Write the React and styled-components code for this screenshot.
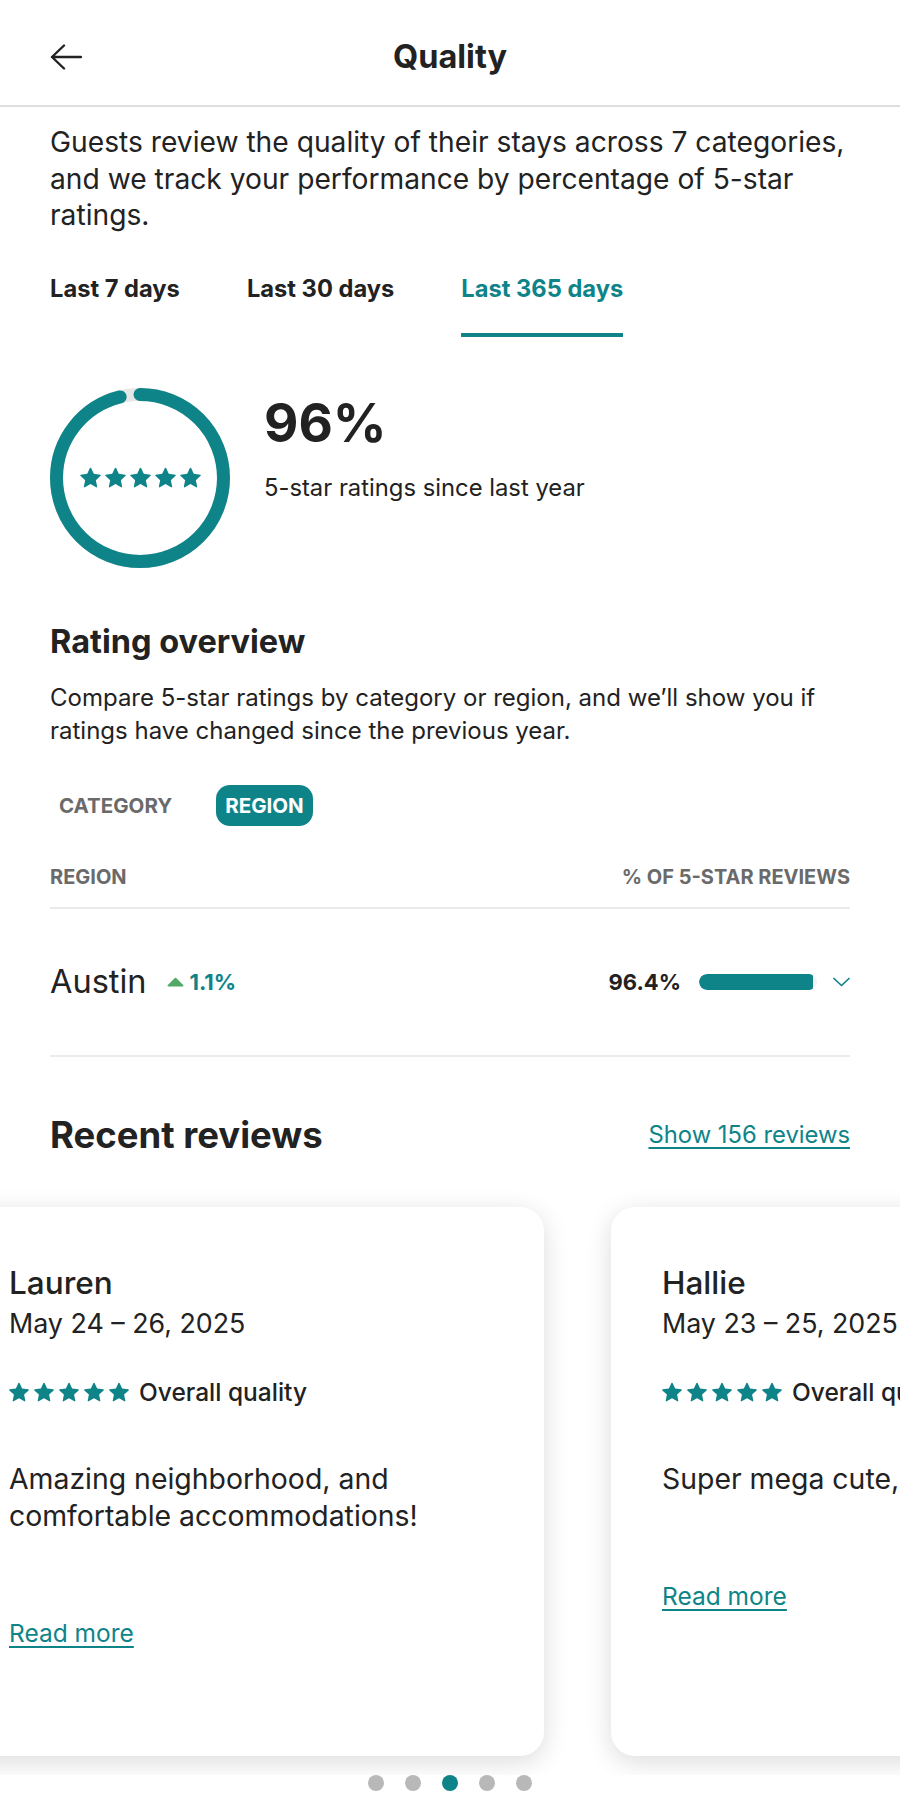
import React from "react";
import styled, { createGlobalStyle } from "styled-components";

const TEAL = "#0e8489";
const INK = "#222222";
const MUTED = "#6a6a6a";
const FONT = `Inter, "Noto Sans", "DejaVu Sans", sans-serif`;

const GlobalStyle = createGlobalStyle`
  html, body { margin: 0; padding: 0; background: #fff; }
  body { font-family: ${FONT}; color: ${INK}; -webkit-font-smoothing: antialiased; }
  * { box-sizing: border-box; }
`;

const Page = styled.div`
  width: 900px;
  height: 1795px;
  overflow: hidden;
  background: #fff;
`;

const Header = styled.header`
  height: 107px;
  padding-top: 8px;
  display: grid;
  grid-template-columns: 1fr auto 1fr;
  align-items: center;
  border-bottom: 2px solid #dedede;
`;

const BackButton = styled.button`
  justify-self: start;
  margin-left: 50px;
  padding: 0;
  border: none;
  background: none;
  display: flex;
  color: ${INK};
`;

const Title = styled.h1`
  margin: 0;
  font-size: 32.5px;
  line-height: 38px;
  font-weight: 700;
`;

const Content = styled.main`
  padding: 0 50px;
`;

const Intro = styled.p`
  margin: 17px 0 0;
  font-size: 28.2px;
  line-height: 36.5px;
`;

const Tabs = styled.nav`
  display: flex;
  gap: 67px;
  margin-top: 41px;
`;

const Tab = styled.button`
  font-family: inherit;
  font-size: 23.7px;
  line-height: 28px;
  font-weight: 700;
  padding: 0 0 30px;
  background: none;
  border: none;
  border-bottom: 4px solid ${(p) => (p.$active ? TEAL : "transparent")};
  color: ${(p) => (p.$active ? TEAL : INK)};
`;

const Summary = styled.section`
  display: flex;
  align-items: flex-start;
  gap: 34px;
  margin-top: 51px;
`;

const RingWrap = styled.div`
  width: 180px;
  height: 180px;
  display: grid;
  place-items: center;
  & > * { grid-area: 1 / 1; }
`;

const StarRow = styled.div`
  display: flex;
  gap: ${(p) => p.$gap || 4}px;
  color: ${TEAL};
`;

const SummaryText = styled.div`
  padding-top: 7px;
`;

const BigPct = styled.div`
  font-size: 53px;
  line-height: 56px;
  font-weight: 700;
`;

const Caption = styled.div`
  margin-top: 22px;
  font-size: 23.8px;
  line-height: 30px;
`;

const Section = styled.section`
  margin-top: 56px;
`;

const SectionTitle = styled.h2`
  margin: 0;
  font-size: 32.5px;
  line-height: 36px;
  font-weight: 700;
`;

const SectionDesc = styled.p`
  margin: 21px 0 0;
  font-size: 24px;
  line-height: 33px;
`;

const Segmented = styled.div`
  display: flex;
  gap: 35px;
  margin-top: 38px;
`;

const SegButton = styled.button`
  height: 41px;
  padding: 0 9px;
  border: none;
  border-radius: 14px;
  font-family: inherit;
  font-size: 20.5px;
  font-weight: 700;
  color: ${(p) => (p.$active ? "#fff" : MUTED)};
  background: ${(p) => (p.$active ? TEAL : "transparent")};
`;

const TableHead = styled.div`
  display: flex;
  justify-content: space-between;
  margin-top: 39px;
  padding-bottom: 18px;
  border-bottom: 2px solid #ebebeb;
  font-size: 20px;
  line-height: 24px;
  font-weight: 700;
  color: ${MUTED};
`;

const RegionRow = styled.div`
  height: 148px;
  display: flex;
  align-items: center;
  justify-content: space-between;
  border-bottom: 2px solid #ebebeb;
`;

const RegionName = styled.div`
  display: flex;
  align-items: center;
  font-size: 32.5px;
`;

const Change = styled.span`
  display: inline-flex;
  align-items: center;
  gap: 6px;
  margin-left: 20px;
  font-size: 22px;
  font-weight: 700;
  color: ${TEAL};
`;

const Score = styled.div`
  display: flex;
  align-items: center;
`;

const ScoreValue = styled.span`
  font-size: 22px;
  font-weight: 700;
`;

const BarTrack = styled.div`
  width: 118px;
  height: 16px;
  margin: 0 16px 0 18px;
  border-radius: 8px;
  background: #f3f3f3;
  overflow: hidden;
`;

const BarFill = styled.div`
  height: 100%;
  background: ${TEAL};
  border-radius: 8px 3px 3px 8px;
`;

const ReviewsHeader = styled.div`
  display: flex;
  justify-content: space-between;
  align-items: center;
  margin-top: 58px;
`;

const ReviewsTitle = styled.h2`
  margin: 0;
  font-size: 36.5px;
  line-height: 40px;
  font-weight: 700;
`;

const TealLink = styled.a`
  color: ${TEAL};
  font-size: ${(p) => p.$size || 23.8}px;
  line-height: ${(p) => (p.$size ? p.$size + 7 : 30)}px;
  text-decoration: underline;
  text-underline-offset: 4px;
  text-decoration-thickness: 1.5px;
`;

const Carousel = styled.div`
  margin-top: 32px;
  padding: 20px 0 19px;
  overflow: hidden;
`;

const Track = styled.div`
  display: flex;
  gap: 67px;
`;

const Card = styled.article`
  flex: 0 0 586px;
  height: 549px;
  padding: 56px 51px 0;
  border-radius: 24px;
  background: #fff;
  box-shadow: 0 6px 26px rgba(0, 0, 0, 0.14);
  display: flex;
  flex-direction: column;
  align-items: flex-start;
`;

const ReviewerName = styled.div`
  font-size: 31.5px;
  line-height: 40px;
  font-weight: 500;
`;

const StayDates = styled.div`
  font-size: 26.8px;
  line-height: 40px;
`;

const RatingRow = styled.div`
  margin-top: 37px;
  height: 24px;
  display: flex;
  align-items: center;
  gap: 10px;
  font-size: 24.5px;
  font-weight: 500;
  white-space: nowrap;
`;

const ReviewText = styled.p`
  align-self: stretch;
  margin: 56px 0 0;
  font-size: 28.4px;
  line-height: 37px;
`;

const ReadMore = styled(TealLink)`
  margin-top: 84px;
`;

const Dots = styled.div`
  display: flex;
  justify-content: center;
  gap: 21px;
`;

const Dot = styled.span`
  width: 16px;
  height: 16px;
  border-radius: 50%;
  background: ${(p) => (p.$active ? TEAL : "#b8b8b8")};
`;

const STAR =
  "M15.094 1.579l-4.124 8.885-9.86 1.27a1 1 0 0 0-.542 1.736l7.293 6.565-1.965 9.852a1 1 0 0 0 1.483 1.061L16 25.951l8.625 4.997a1 1 0 0 0 1.482-1.06l-1.965-9.853 7.293-6.565a1 1 0 0 0-.541-1.735l-9.86-1.271-4.127-8.885a1 1 0 0 0-1.814 0z";

const Star = ({ size }) => (
  <svg width={size} height={size} viewBox="0 0 32 32" fill="currentColor" aria-hidden="true">
    <path d={STAR} />
  </svg>
);

const Stars = ({ size, gap }) => (
  <StarRow $gap={gap}>
    {[0, 1, 2, 3, 4].map((i) => (
      <Star key={i} size={size} />
    ))}
  </StarRow>
);

const BackArrow = () => (
  <svg width="32" height="26" viewBox="0 0 32 26" fill="none" stroke="currentColor" strokeWidth="2.4" strokeLinecap="round" strokeLinejoin="round">
    <path d="M2 13H31M14 1.5L2 13l12 11.5" />
  </svg>
);

const Ring = ({ value }) => {
  const r = 83.5;
  const c = 2 * Math.PI * r;
  return (
    <svg width="180" height="180" viewBox="0 0 180 180">
      <circle cx="90" cy="90" r={r} fill="none" stroke="#e6e6e6" strokeWidth="13" />
      <circle
        cx="90"
        cy="90"
        r={r}
        fill="none"
        stroke={TEAL}
        strokeWidth="13"
        strokeLinecap="round"
        strokeDasharray={`${c * value} ${c}`}
        transform="rotate(-90 90 90)"
      />
    </svg>
  );
};

const UpTriangle = () => (
  <svg width="17" height="10" viewBox="0 0 16 9">
    <path
      d="M8 .6c.5 0 .9.3 1.3.8l5.9 5.9c.6.7.3 1.4-.6 1.4H1.4C.5 8.7.2 8 .8 7.3l5.9-5.9C7.1.9 7.5.6 8 .6z"
      fill="#52a866"
    />
  </svg>
);

const ChevronDown = () => (
  <svg width="17" height="10" viewBox="0 0 17 10" fill="none" stroke={TEAL} strokeWidth="1.7" strokeLinecap="round" strokeLinejoin="round">
    <path d="M1 1.5l7.5 7 7.5-7" />
  </svg>
);

const tabs = ["Last 7 days", "Last 30 days", "Last 365 days"];

const reviews = [
  { name: "Marcus", dates: "May 30 – Jun 1, 2025", text: "Great location and a very clean space." },
  { name: "Priya", dates: "May 27 – 29, 2025", text: "Lovely stay, would book again." },
  { name: "Lauren", dates: "May 24 – 26, 2025", text: "Amazing neighborhood, and comfortable accommodations!" },
  { name: "Hallie", dates: "May 23 – 25, 2025", text: "Super mega cute, loved it!" },
  { name: "Jordan", dates: "May 18 – 20, 2025", text: "Host was super responsive." },
];

const ACTIVE = 2;
const CARD_W = 586;
const GAP = 67;
const FIRST_LEFT = -42;

export default function App() {
  const offset = FIRST_LEFT - ACTIVE * (CARD_W + GAP);
  const pct = 96.4;
  return (
    <>
      <GlobalStyle />
      <Page>
        <Header>
          <BackButton aria-label="Back">
            <BackArrow />
          </BackButton>
          <Title>Quality</Title>
        </Header>
        <Content>
          <Intro>
            Guests review the quality of their stays across 7 categories, and we track your performance by
            percentage of 5-star ratings.
          </Intro>
          <Tabs>
            {tabs.map((t, i) => (
              <Tab key={t} $active={i === 2}>
                {t}
              </Tab>
            ))}
          </Tabs>
          <Summary>
            <RingWrap>
              <Ring value={0.96} />
              <Stars size={21} gap={4} />
            </RingWrap>
            <SummaryText>
              <BigPct>96%</BigPct>
              <Caption>5-star ratings since last year</Caption>
            </SummaryText>
          </Summary>
          <Section>
            <SectionTitle>Rating overview</SectionTitle>
            <SectionDesc>
              Compare 5-star ratings by category or region, and we’ll show you if ratings have changed since the
              previous year.
            </SectionDesc>
          </Section>
          <Segmented>
            <SegButton>CATEGORY</SegButton>
            <SegButton $active>REGION</SegButton>
          </Segmented>
          <TableHead>
            <span>REGION</span>
            <span>% OF 5-STAR REVIEWS</span>
          </TableHead>
          <RegionRow>
            <RegionName>
              Austin
              <Change>
                <UpTriangle />
                1.1%
              </Change>
            </RegionName>
            <Score>
              <ScoreValue>{pct}%</ScoreValue>
              <BarTrack>
                <BarFill style={{ width: `${pct}%` }} />
              </BarTrack>
              <ChevronDown />
            </Score>
          </RegionRow>
          <ReviewsHeader>
            <ReviewsTitle>Recent reviews</ReviewsTitle>
            <TealLink href="#">Show 156 reviews</TealLink>
          </ReviewsHeader>
        </Content>
        <Carousel>
          <Track style={{ transform: `translateX(${offset}px)` }}>
            {reviews.map((r) => (
              <Card key={r.name}>
                <ReviewerName>{r.name}</ReviewerName>
                <StayDates>{r.dates}</StayDates>
                <RatingRow>
                  <Stars size={20} gap={5} />
                  Overall quality
                </RatingRow>
                <ReviewText>{r.text}</ReviewText>
                <ReadMore href="#" $size={24.5}>
                  Read more
                </ReadMore>
              </Card>
            ))}
          </Track>
        </Carousel>
        <Dots>
          {reviews.map((r, i) => (
            <Dot key={r.name} $active={i === ACTIVE} />
          ))}
        </Dots>
      </Page>
    </>
  );
}
